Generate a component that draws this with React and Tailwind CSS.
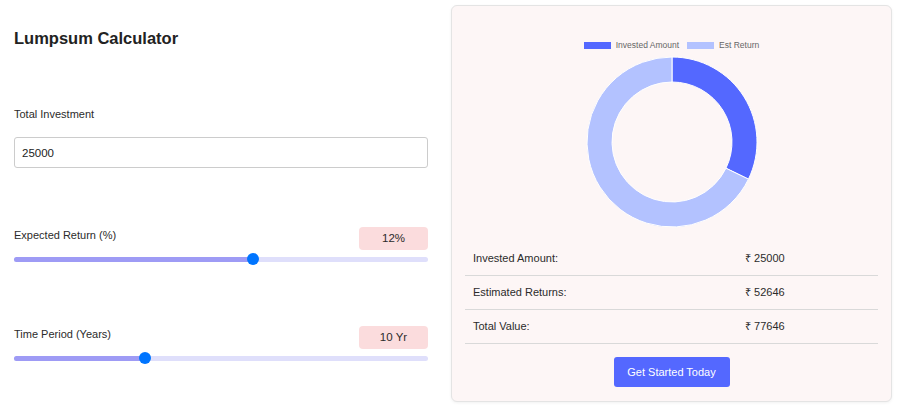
import React from "react";

const INVESTED = 25000;
const RETURNS = 52646;
const TOTAL = INVESTED + RETURNS;

// donut segment path (angles in degrees, clockwise from top)
const arcPath = (cx, cy, R, r, a0, a1) => {
  const pt = (rad, deg) => {
    const t = (deg * Math.PI) / 180;
    return [cx + rad * Math.sin(t), cy - rad * Math.cos(t)];
  };
  const large = a1 - a0 > 180 ? 1 : 0;
  const [x0, y0] = pt(R, a0);
  const [x1, y1] = pt(R, a1);
  const [x2, y2] = pt(r, a1);
  const [x3, y3] = pt(r, a0);
  return `M${x0} ${y0} A${R} ${R} 0 ${large} 1 ${x1} ${y1} L${x2} ${y2} A${r} ${r} 0 ${large} 0 ${x3} ${y3} Z`;
};

const Slider = ({ value, min, max }) => {
  const frac = (value - min) / (max - min);
  const thumb = 6 + frac * (414 - 12);
  return (
    <div className="relative h-[12px] mt-[3px]">
      <div className="absolute left-0 right-0 top-[3.5px] h-[5px] rounded-full bg-[#dfdffb]" />
      <div
        className="absolute left-0 top-[3.5px] h-[5px] rounded-full bg-[#9e9bf5]"
        style={{ width: thumb }}
      />
      <div
        className="absolute top-0 w-[12px] h-[12px] rounded-full bg-[#0075ff]"
        style={{ left: thumb - 6 }}
      />
    </div>
  );
};

const RangeField = ({ label, badge, value, min, max, mt }) => (
  <div className={mt}>
    <div className="flex justify-between items-start">
      <span className="mt-[1px] text-[11px] leading-[14px] text-[#2b2b2b]">{label}</span>
      <span className="w-[69px] h-[23px] rounded-[4px] bg-[#fbdcdd] text-[11.5px] text-[#2b2b2b] flex items-center justify-center">
        {badge}
      </span>
    </div>
    <Slider value={value} min={min} max={max} />
  </div>
);

const App = () => {
  const split = (INVESTED / TOTAL) * 360;
  const rows = [
    ["Invested Amount:", INVESTED],
    ["Estimated Returns:", RETURNS],
    ["Total Value:", TOTAL],
  ];

  return (
    <div className="w-[899px] h-[408px] bg-white flex font-['Liberation_Sans',Arial,sans-serif]">
      {/* Left: inputs */}
      <div className="w-[414px] ml-[14px] pt-[28px]">
        <h1 className="text-[16.5px] leading-[20px] font-bold text-[#222]">Lumpsum Calculator</h1>

        <label className="block mt-[59px] text-[11px] leading-[14px] text-[#2b2b2b]">Total Investment</label>
        <input
          type="text"
          defaultValue="25000"
          className="mt-[16px] w-full h-[31px] border border-[#ccc] rounded-[3px] px-[7px] text-[11.5px] text-[#222] outline-none"
        />

        <RangeField label="Expected Return (%)" badge="12%" value={12} min={1} max={20} mt="mt-[59px]" />
        <RangeField label="Time Period (Years)" badge="10 Yr" value={10} min={1} max={30} mt="mt-[61px]" />
      </div>

      {/* Right: chart + summary */}
      <div className="ml-[23px] mt-[5px] w-[441px] h-[397px] bg-[#fdf6f6] border border-[#e4e4e4] rounded-[6px] shadow-[0_1px_3px_rgba(0,0,0,0.06)] px-[13px] pt-[34px] flex flex-col items-center">
        {/* legend */}
        <div className="flex items-center h-[10px] text-[8.5px] text-[#666]">
          <span className="w-[27px] h-[7px] bg-[#5468ff]" />
          <span className="ml-[5px]">Invested Amount</span>
          <span className="ml-[8px] w-[27px] h-[7px] bg-[#b3c2ff]" />
          <span className="ml-[5px]">Est Return</span>
        </div>

        <svg width="172" height="172" viewBox="-1 -1 172 172" className="mt-[6px]">
          <path d={arcPath(85, 85, 85, 60, 0, split)} fill="#5468ff" stroke="#fff" strokeWidth="1" />
          <path d={arcPath(85, 85, 85, 60, split, 360)} fill="#b3c2ff" stroke="#fff" strokeWidth="1" />
        </svg>

        <div className="w-full mt-[14px]">
          {rows.map(([k, v]) => (
            <div key={k} className="grid grid-cols-[272px_1fr] h-[34px] items-center border-b border-[#d9d9d9] text-[11px] text-[#2b2b2b]">
              <span className="pl-[8px]">{k}</span>
              <span className="pl-[8px]">₹ {v}</span>
            </div>
          ))}
        </div>

        <button className="mt-[13px] w-[116px] h-[30px] rounded-[3px] bg-[#5468ff] text-white text-[11px]">
          Get Started Today
        </button>
      </div>
    </div>
  );
};

export default App;
